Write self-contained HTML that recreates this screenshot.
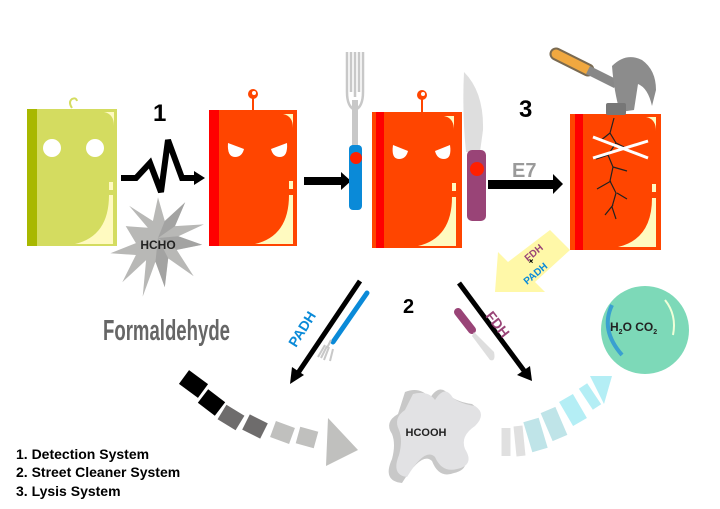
<!DOCTYPE html>
<html><head><meta charset="utf-8"><style>
html,body{margin:0;padding:0;background:#fff;width:720px;height:509px;overflow:hidden}
svg{display:block}
text{font-family:"Liberation Sans",sans-serif;font-weight:bold}
</style></head><body>
<svg width="720" height="509" viewBox="0 0 720 509" xmlns="http://www.w3.org/2000/svg">
<!-- green book -->
<path d="M72,108 q-4,-6 0,-9 q4,-2 5,2" fill="none" stroke="#d4dc60" stroke-width="2"/>
<rect x="27" y="109" width="90" height="137" fill="#d4dc60"/>
<rect x="27" y="109" width="10" height="137" fill="#a8b800"/>
<circle cx="52" cy="148" r="9" fill="#fff"/><circle cx="95" cy="148" r="9" fill="#fff"/>
<path d="M104,112 q10,2 10,14 l0,-14z" fill="#fffac0"/>
<rect x="109" y="182" width="4" height="8" fill="#fffac0"/>
<path d="M109,195 l4,0 l0,49 l-38,0 q34,-8 34,-49z" fill="#fffac0"/>
<!-- number 1 and zigzag -->
<text x="153" y="121" font-size="24">1</text>
<polyline points="121,178 136,178 150,163 161,192 168,140 182,178 195,178" fill="none" stroke="#000" stroke-width="6" stroke-linejoin="miter"/>
<polygon points="194,171 205,178 194,185" fill="#000"/>
<!-- star -->
<g transform="translate(158,238) scale(0.85) translate(-158,-238)">
<polygon points="158,190 166,218 190,196 178,224 212,222 182,236 210,246 180,252 200,283 170,262 166,296 155,266 140,307 144,264 116,290 132,258 102,256 132,244 120,224 146,226 124,200 152,218" fill="#b8b8b6"/>
<polygon points="158,238 166,218 190,196 178,224 158,238 182,236 210,246 180,252 158,238 170,262 166,296 155,266 158,238" fill="#8e8e8e" opacity="0.5"/>
</g>
<text x="158" y="249" font-size="12" text-anchor="middle" fill="#222">HCHO</text>
<text x="103" y="340" font-size="29" fill="#666" textLength="127" lengthAdjust="spacingAndGlyphs">Formaldehyde</text>
<!-- red book 1 -->
<line x1="253" y1="94" x2="253" y2="110" stroke="#ff4500" stroke-width="2"/>
<circle cx="253" cy="94" r="5" fill="#ff4500"/><circle cx="254" cy="93" r="2" fill="#fff"/>
<rect x="209" y="110" width="88" height="136" fill="#ff4500"/>
<rect x="209" y="110" width="10" height="136" fill="#ff0000"/>
<path d="M228,143 l16,6 q-2,8 -9,8 q-8,0 -7,-14z" fill="#fff"/>
<path d="M287,143 l-16,6 q2,8 9,8 q8,0 7,-14z" fill="#fff"/>
<path d="M283,114 q10,2 10,14 l0,-14z" fill="#fffac0"/>
<rect x="289" y="181" width="4" height="8" fill="#fffac0"/>
<path d="M289,195 l4,0 l0,49 l-38,0 q34,-8 34,-49z" fill="#fffac0"/>
<!-- arrow to fork -->
<rect x="304" y="177" width="38" height="8" fill="#000"/><polygon points="341,172 351,181 341,190" fill="#000"/>
<!-- fork -->
<path d="M347,52 l0,40 q0,15 8,18 q8,-3 8,-18 l0,-40 M351,52 l0,40 M355,52 l0,45 M359,52 l0,40" fill="none" stroke="#c8c8c8" stroke-width="2.5"/>
<rect x="352" y="100" width="6" height="46" fill="#c8c8c8"/>
<rect x="349" y="145" width="13" height="65" rx="4" fill="#0a8ad8"/>
<circle cx="356" cy="158" r="6" fill="#ff2000"/>
<!-- red book 2 -->
<line x1="422" y1="96" x2="422" y2="112" stroke="#ff4500" stroke-width="2"/>
<circle cx="422" cy="95" r="5" fill="#ff4500"/><circle cx="423" cy="94" r="2" fill="#fff"/>
<rect x="372" y="112" width="90" height="136" fill="#ff4500"/>
<rect x="376" y="112" width="8" height="136" fill="#ff0000"/>
<path d="M393,145 l15,6 q-2,8 -9,8 q-8,0 -6,-14z" fill="#fff"/>
<path d="M450,145 l-15,6 q2,8 9,8 q8,0 6,-14z" fill="#fff"/>
<path d="M444,116 q10,2 10,14 l0,-14z" fill="#fffac0"/>
<rect x="452" y="183" width="4" height="8" fill="#fffac0"/>
<path d="M452,197 l4,0 l0,49 l-38,0 q34,-8 34,-49z" fill="#fffac0"/>
<!-- knife -->
<path d="M464,72 q20,20 19,58 l-3,22 l-14,0 q-4,-40 -2,-80z" fill="#dedede"/>
<rect x="467" y="150" width="19" height="71" rx="5" fill="#994477"/>
<circle cx="477" cy="169" r="7" fill="#ff2000"/>
<!-- 3 and E7 arrow -->
<text x="519" y="117" font-size="24">3</text>
<text x="512" y="177" font-size="20" fill="#9a9a9a">E7</text>
<rect x="488" y="180" width="66" height="9" fill="#000"/><polygon points="553,174 563,184 553,194" fill="#000"/>
<!-- broken book -->
<rect x="570" y="114" width="91" height="136" fill="#ff4500"/>
<rect x="575" y="114" width="8" height="136" fill="#ff0000"/>
<path d="M646,117 q10,2 10,14 l0,-14z" fill="#fffac0"/>
<rect x="652" y="184" width="4" height="8" fill="#fffac0"/>
<path d="M652,198 l4,0 l0,49 l-38,0 q34,-8 34,-49z" fill="#fffac0"/>
<path d="M614,118 l-4,15 l6,10 l-8,12 l5,12 l-3,14 l6,12 l-4,14 l4,12 M610,133 l-10,8 M616,143 l12,6 M608,155 l-12,4 M613,167 l14,4 M611,181 l-14,8 M617,193 l10,6 M613,205 l-8,10" fill="none" stroke="#222" stroke-width="1.2"/>
<line x1="593" y1="137" x2="648" y2="158" stroke="#fff" stroke-width="3"/>
<line x1="593" y1="158" x2="648" y2="141" stroke="#fff" stroke-width="3"/>
<!-- hammer -->
<path d="M556,54 l32,16" stroke="#7a6a50" stroke-width="13" stroke-linecap="round"/>
<path d="M556,54 l32,16" stroke="#f0a840" stroke-width="9" stroke-linecap="round"/>
<path d="M588,70 l28,14" stroke="#888" stroke-width="9"/>
<path d="M612,66 q14,-14 30,-6 q14,10 14,30 l-4,16 q-4,-18 -14,-22 l-4,26 l-14,2 q-6,-20 -8,-46z" fill="#8c8c8c"/>
<rect x="606" y="103" width="20" height="12" rx="2" fill="#777"/>
<!-- yellow arrow -->
<polygon points="550,230 570,250 535,282 545,292 495,292 498,252 508,262" fill="#fff8a8"/>
<text x="528" y="262" font-size="10" fill="#994477" transform="rotate(-40 528 262)">FDH</text>
<text x="531" y="265" font-size="9" transform="rotate(-40 531 265)">+</text>
<text x="527" y="285" font-size="10" fill="#0a8ad8" transform="rotate(-40 527 285)">PADH</text>
<!-- 2 -->
<text x="403" y="313" font-size="20">2</text>
<!-- black arrows -->
<line x1="360" y1="281" x2="298" y2="373" stroke="#000" stroke-width="5"/>
<polygon points="290,384 292,367 304,375" fill="#000"/>
<text x="296" y="348" font-size="14" fill="#0a8ad8" transform="rotate(-58 296 348)">PADH</text>
<line x1="367" y1="293" x2="333" y2="342" stroke="#0a8ad8" stroke-width="5" stroke-linecap="round"/>
<path d="M331,340 l-4,8 M327,346 l-6,12 M325,345 l-7,12 M329,347 l-5,13 M333,349 l-3,12" stroke="#c8c8c8" stroke-width="2"/>
<line x1="459" y1="283" x2="525" y2="372" stroke="#000" stroke-width="5"/>
<polygon points="532,381 517,375 530,366" fill="#000"/>
<text x="485" y="316" font-size="14" fill="#994477" transform="rotate(52 485 316)">FDH</text>
<path d="M458,312 l14,18" stroke="#994477" stroke-width="8" stroke-linecap="round"/>
<path d="M474,332 l20,20 q2,10 -4,8 l-18,-24z" fill="#dedede"/>
<!-- sphere -->
<circle cx="645" cy="330" r="44" fill="#7dd9b8"/>
<path d="M612,305 q-12,25 10,50" fill="none" stroke="#3aa0d0" stroke-width="4"/>
<path d="M665,300 q12,15 8,35" fill="none" stroke="#efffd8" stroke-width="2"/>
<text x="610" y="331" font-size="12" fill="#222">H<tspan font-size="7" dy="3">2</tspan><tspan dy="-3">O  CO</tspan><tspan font-size="7" dy="3">2</tspan></text>
<!-- left dashed arc -->
<g stroke-width="17" fill="none">
<line x1="184" y1="377" x2="203" y2="391" stroke="#000"/>
<line x1="203" y1="396" x2="220" y2="409" stroke="#000"/>
<line x1="222" y1="412" x2="240" y2="423" stroke="#6e6c6c"/>
<line x1="246" y1="422" x2="264" y2="431" stroke="#6e6c6c"/>
<line x1="273" y1="429" x2="292" y2="436" stroke="#c0c0be"/>
<line x1="298" y1="435" x2="316" y2="440" stroke="#c0c0be"/>
</g>
<polygon points="328,418 358,450 326,466" fill="#c0c0be"/>
<!-- HCOOH blob -->
<path d="M405,392 q15,-6 25,6 q10,-16 20,-2 q8,6 22,8 q12,8 0,22 q-15,10 -10,25 q10,18 -8,22 q-15,6 -22,-12 q-10,-10 -30,22 q-20,-2 -10,-24 q4,-15 0,-25 q-8,-12 6,-20z" fill="#c8c8c8"/>
<path d="M413,394 q15,-4 22,6 q10,-16 18,-2 q8,6 22,8 q12,8 0,20 q-15,10 -10,23 q10,16 -8,20 q-15,4 -22,-12 q-10,-10 -28,20 q-16,-2 -8,-22 q4,-15 0,-25 q-6,-12 6,-20z" fill="#e2e2e4"/>
<text x="426" y="436" font-size="11" text-anchor="middle" fill="#222">HCOOH</text>
<!-- right dashed arc -->
<g stroke-width="16" fill="none">
<line x1="506" y1="456" x2="506" y2="428" stroke="#e0e0e0" stroke-width="9"/>
<line x1="521" y1="456" x2="518" y2="426" stroke="#e0e0e0" stroke-width="9"/>
<line x1="540" y1="450" x2="531" y2="420" stroke="#bfe4e8"/>
<line x1="560" y1="438" x2="548" y2="410" stroke="#bfe4e8"/>
<line x1="580" y1="422" x2="566" y2="398" stroke="#b4eef5"/>
<line x1="597" y1="407" x2="583" y2="386" stroke="#b4eef5" stroke-width="10"/>
</g>
<polygon points="590,376 612,376 604,404" fill="#b4eef5"/>
<!-- legend -->
<g font-size="14" fill="#000">
<text x="16" y="459">1. Detection  System</text>
<text x="16" y="477">2. Street  Cleaner System</text>
<text x="16" y="496">3. Lysis  System</text>
</g>
</svg>
</body></html>
